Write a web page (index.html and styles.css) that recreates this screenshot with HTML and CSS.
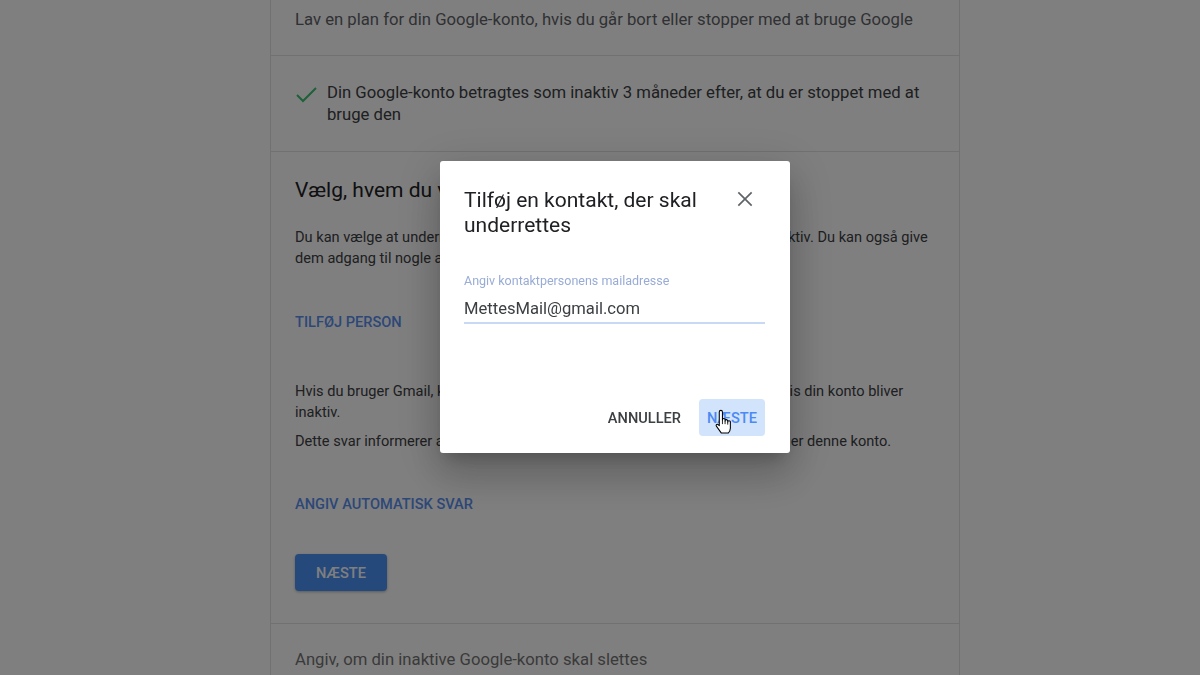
FILE: index.html
```html
<!DOCTYPE html>
<html lang="da">
<head>
  <meta charset="UTF-8" />
  <meta name="viewport" content="width=device-width, initial-scale=1.0"/>
  <title>Administrator af inaktiv konto</title>
  <link rel="stylesheet" href="styles.css">
</head>
<body>
  <div class="layout">
    <div class="sidebar"></div>

    <main class="card">
      <section class="section intro">
        Lav en plan for din Google-konto, hvis du går bort eller stopper med at bruge Google
      </section>

      <section class="section status">
        <svg class="check" width="24" height="24" viewBox="0 0 24 24">
          <polyline points="3,13 9,19 22,6" fill="none" stroke="currentColor" stroke-width="2"/>
        </svg>
        <span>Din Google-konto betragtes som inaktiv 3 måneder efter, at du er stoppet med at bruge den</span>
      </section>

      <section class="section contacts">
        <h2>Vælg, hvem du vil underrette, og hvad de kan se</h2>
        <p>Du kan vælge at underrette op til 10 personer, når din Google-konto bliver inaktiv. Du kan også give dem adgang til nogle af dine data.</p>
        <a class="link" href="#">TILFØJ PERSON</a>
        <p class="gap">Hvis du bruger Gmail, kan du sende et automatisk svar til dem, der skriver, hvis din konto bliver inaktiv.</p>
        <p class="tight">Dette svar informerer alle, der sender dig en mail, om at du ikke længere bruger denne konto.</p>
        <a class="link reply" href="#">ANGIV AUTOMATISK SVAR</a>
        <button class="primary">NÆSTE</button>
      </section>

      <section class="section next">
        Angiv, om din inaktive Google-konto skal slettes
      </section>
    </main>
  </div>

  <div class="overlay">
    <div class="dialog">
      <div class="dialog-head">
        <h3>Tilføj en kontakt, der skal underrettes</h3>
        <button class="close" aria-label="Luk">
          <svg width="24" height="24" viewBox="0 0 24 24">
            <path d="M4 4 L20 20 M20 4 L4 20" stroke="currentColor" stroke-width="2" fill="none"/>
          </svg>
        </button>
      </div>

      <label class="field-label" for="email">Angiv kontaktpersonens mailadresse</label>
      <input class="field" id="email" type="text" value="MettesMail@gmail.com">

      <div class="actions">
        <button class="text-btn">ANNULLER</button>
        <button class="text-btn active">NÆSTE
          <svg class="cursor" width="19" height="26" viewBox="0 0 18 24">
            <path d="M5 2.5a1.5 1.5 0 0 1 3 0V10a1.25 1.25 0 0 1 2.5 0v1a1.25 1.25 0 0 1 2.5 0v1a1.25 1.25 0 0 1 2.5 0v6c0 2-1 3.5-2 4.5H7L2.4 16.2c-1-1.3 0.2-2.7 1.4-1.8L5 15.5Z" fill="#fff" stroke="#000" stroke-width="1" stroke-linejoin="round"/>
            <path d="M8 10v4M10.5 11v3M13 12v2.5" stroke="#000" stroke-width="0.8"/>
          </svg>
        </button>
      </div>
    </div>
  </div>
</body>
</html>
```

FILE: styles.css
```css
body {
  margin: 0;
  font-family: Roboto, "Liberation Sans", sans-serif;
  background-color: #fff;
  color: #3c4043;
  overflow: hidden;
}
.layout {
  display: flex;
}
.sidebar {
  width: 270px;
  flex-shrink: 0;
}
.card {
  width: 690px;
  box-sizing: border-box;
  border: 1px solid #e2e2e2;
  border-top: none;
}
.section {
  padding: 24px 24px;
  border-bottom: 1px solid #e2e2e2;
}
.intro {
  padding-top: 8px;
  padding-bottom: 23px;
  font-size: 16.7px;
  line-height: 24px;
  color: #5f6368;
}
.status {
  display: flex;
  gap: 9px;
  padding-top: 26px;
  padding-bottom: 25px;
  font-size: 16.7px;
  line-height: 22px;
  color: #3c4043;
}
.check {
  flex-shrink: 0;
  color: #3cc070;
  margin-left: -1px;
}
.contacts {
  padding-top: 24px;
  padding-bottom: 32px;
}
.contacts h2 {
  margin: 0;
  font-size: 21px;
  font-weight: 400;
  line-height: 28px;
  color: #202124;
}
.contacts p {
  margin: 23px 0 0;
  font-size: 14.6px;
  line-height: 21px;
  color: #3c4043;
}
.contacts p.gap {
  margin-top: 49px;
}
.contacts p.tight {
  margin-top: 8px;
}
.link {
  display: block;
  margin-top: 43px;
  font-size: 14.6px;
  font-weight: 500;
  line-height: 20px;
  color: #5a8ff0;
  text-decoration: none;
}
.link.reply {
  margin-top: 42px;
}
.primary {
  display: block;
  margin-top: 40px;
  height: 37px;
  padding: 0 21px;
  border: none;
  border-radius: 4px;
  background-color: #4c92f8;
  color: #fff;
  font-family: inherit;
  font-size: 14.6px;
  font-weight: 500;
  box-shadow: 0 1px 3px rgba(0,0,0,0.3);
}
.next {
  border-bottom: none;
  padding-top: 24px;
  font-size: 16.7px;
  line-height: 24px;
  color: #757575;
}
.overlay {
  position: fixed;
  top: 0; left: 0;
  width: 100vw; height: 100vh;
  background: rgba(0, 0, 0, 0.5);
  z-index: 999;
}
.dialog {
  position: absolute;
  top: 161px;
  left: 440px;
  width: 350px;
  box-sizing: border-box;
  padding: 27px 25px 17px 24px;
  background: #fff;
  border-radius: 3px;
  box-shadow: 0 11px 15px -7px rgba(0,0,0,0.2), 0 24px 38px 3px rgba(0,0,0,0.14), 0 9px 46px 8px rgba(0,0,0,0.12);
}
.dialog-head {
  display: flex;
  align-items: flex-start;
  gap: 20px;
}
.dialog-head h3 {
  flex: 1;
  margin: 0;
  font-size: 21px;
  font-weight: 400;
  line-height: 25px;
  color: #202124;
}
.close {
  width: 40px;
  height: 40px;
  margin-top: -9px;
  padding: 0;
  border: none;
  background: none;
  color: #5f6368;
  display: flex;
  align-items: center;
  justify-content: center;
}
.close svg {
  width: 20px;
  height: 20px;
}
.field-label {
  display: block;
  margin-top: 35px;
  font-size: 12.5px;
  line-height: 16px;
  color: #98acd6;
}
.field {
  display: block;
  width: 100%;
  box-sizing: border-box;
  margin-top: 7px;
  padding: 0 0 2px;
  height: 28px;
  border: none;
  border-bottom: 2px solid #c8d9f6;
  outline: none;
  font-family: inherit;
  font-size: 16.6px;
  line-height: 24px;
  color: #3c4043;
}
.actions {
  display: flex;
  justify-content: flex-end;
  gap: 10px;
  margin-top: 75px;
}
.text-btn {
  position: relative;
  height: 37px;
  padding: 0 8px;
  border: none;
  border-radius: 4px;
  background: none;
  font-family: inherit;
  font-size: 14.6px;
  font-weight: 500;
  color: #3c4043;
}
.text-btn.active {
  background-color: #d2e3fc;
  color: #4b8af5;
}
.cursor {
  position: absolute;
  left: 15px;
  top: 10px;
}
```
